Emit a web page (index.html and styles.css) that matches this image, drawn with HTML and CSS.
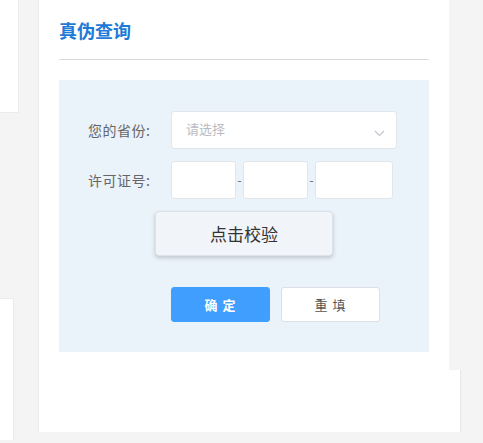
FILE: index.html
```html
<!DOCTYPE html>
<html lang="zh-CN">
<head>
<meta charset="utf-8">
<title>真伪查询</title>
<link rel="stylesheet" href="styles.css">
</head>
<body>
<div class="page">
  <aside class="side">
    <div class="side-top"></div>
    <div class="side-bottom"></div>
  </aside>
  <main class="card">
    <h1 class="title">真伪查询</h1>
    <div class="divider"></div>
    <section class="panel">
      <div class="row">
        <label class="label">您的省份:</label>
        <div class="select">
          <span class="placeholder">请选择</span>
          <svg class="chev" width="11" height="7" viewBox="0 0 11 7"><path d="M1 1l4.5 4.5L10 1" fill="none" stroke="#c0c4cc" stroke-width="1.1"/></svg>
        </div>
      </div>
      <div class="row row2">
        <label class="label">许可证号:</label>
        <div class="codes">
          <div class="box b1"></div>
          <span class="dash">-</span>
          <div class="box b2"></div>
          <span class="dash">-</span>
          <div class="box b3"></div>
        </div>
      </div>
      <div class="check-row">
        <button class="check">点击校验</button>
      </div>
      <div class="actions">
        <button class="btn primary">确 定</button>
        <button class="btn plain">重 填</button>
      </div>
    </section>
  </main>
  <div class="edge"></div>
</div>
</body>
</html>
```
FILE: styles.css
```css
* { box-sizing: border-box; }
html, body { margin: 0; padding: 0; }
body {
  background: #f4f4f5;
  font-family: "Noto Sans CJK SC", "Noto Sans", sans-serif;
  width: 483px;
  height: 443px;
  overflow: hidden;
}
.page {
  position: relative;
  display: flex;
  height: 443px;
}
.side {
  width: 19px;
  display: flex;
  flex-direction: column;
}
.side-top {
  height: 113px;
  background: #fff;
  border-right: 1px solid #ececec;
  border-bottom: 1px solid #ececec;
}
.side-bottom {
  margin-top: 185px;
  width: 14px;
  height: 142px;
  background: #fff;
  border-right: 1px solid #ececec;
  border-top: 1px solid #ececec;
}
.card {
  margin-left: 19px;
  width: 411px;
  height: 432px;
  background: #fff;
  padding: 0 20px 0 20px;
  border-left: 1px solid #ededed;
}
.title {
  margin: 0;
  padding-top: 20px;
  height: 40px;
  font-size: 18px;
  line-height: 20px;
  font-weight: bold;
  color: #1d7ad6;
  letter-spacing: 0;
}
.divider {
  margin-top: 19px;
  height: 1px;
  background: #d9dbde;
}
.panel {
  margin-top: 20px;
  height: 272px;
  background: #eaf2fa;
  padding: 31px 0 0 29px;
}
.row {
  display: flex;
  align-items: center;
  height: 38px;
}
.row2 { margin-top: 12px; }
.label {
  width: 83px;
  font-size: 14px;
  color: #666;
  letter-spacing: 0.5px;
}
.select {
  width: 226px;
  height: 38px;
  background: #fff;
  border: 1px solid #e1e6ec;
  border-radius: 3px;
  display: flex;
  align-items: center;
  justify-content: space-between;
  padding: 0 11px 0 14px;
}
.placeholder {
  font-size: 13px;
  color: #b9bcc2;
  margin-top: -3px;
}
.chev { margin-top: 7px; }
.codes {
  display: flex;
  align-items: center;
}
.box {
  height: 38px;
  background: #fff;
  border: 1px solid #e1e6ec;
  border-radius: 3px;
}
.b1 { width: 65px; }
.b2 { width: 65px; }
.b3 { width: 78px; }
.dash {
  width: 7px;
  text-align: center;
  font-size: 13px;
  color: #777;
  line-height: 38px;
}
.check-row {
  margin-top: 12px;
  padding-left: 67px;
}
.check {
  width: 178px;
  height: 45px;
  background: #f1f4f8;
  border: 1px solid #dde2e8;
  border-radius: 4px;
  box-shadow: 0 2px 4px rgba(0,0,0,0.18);
  font-family: inherit;
  font-size: 17px;
  color: #333;
  cursor: pointer;
}
.actions {
  margin-top: 31px;
  padding-left: 83px;
  display: flex;
  gap: 11px;
}
.btn {
  width: 99px;
  height: 35px;
  border-radius: 3px;
  font-family: inherit;
  font-size: 13px;
  letter-spacing: 1px;
  cursor: pointer;
}
.primary {
  background: #409eff;
  border: 1px solid #409eff;
  color: #fff;
  font-weight: bold;
}
.plain {
  background: #fff;
  border: 1px solid #dcdfe6;
  color: #555;
}
.edge {
  position: absolute;
  left: 449px;
  top: 370px;
  width: 12px;
  height: 62px;
  background: #fff;
  border-right: 1px solid #e6e6e6;
}
```
